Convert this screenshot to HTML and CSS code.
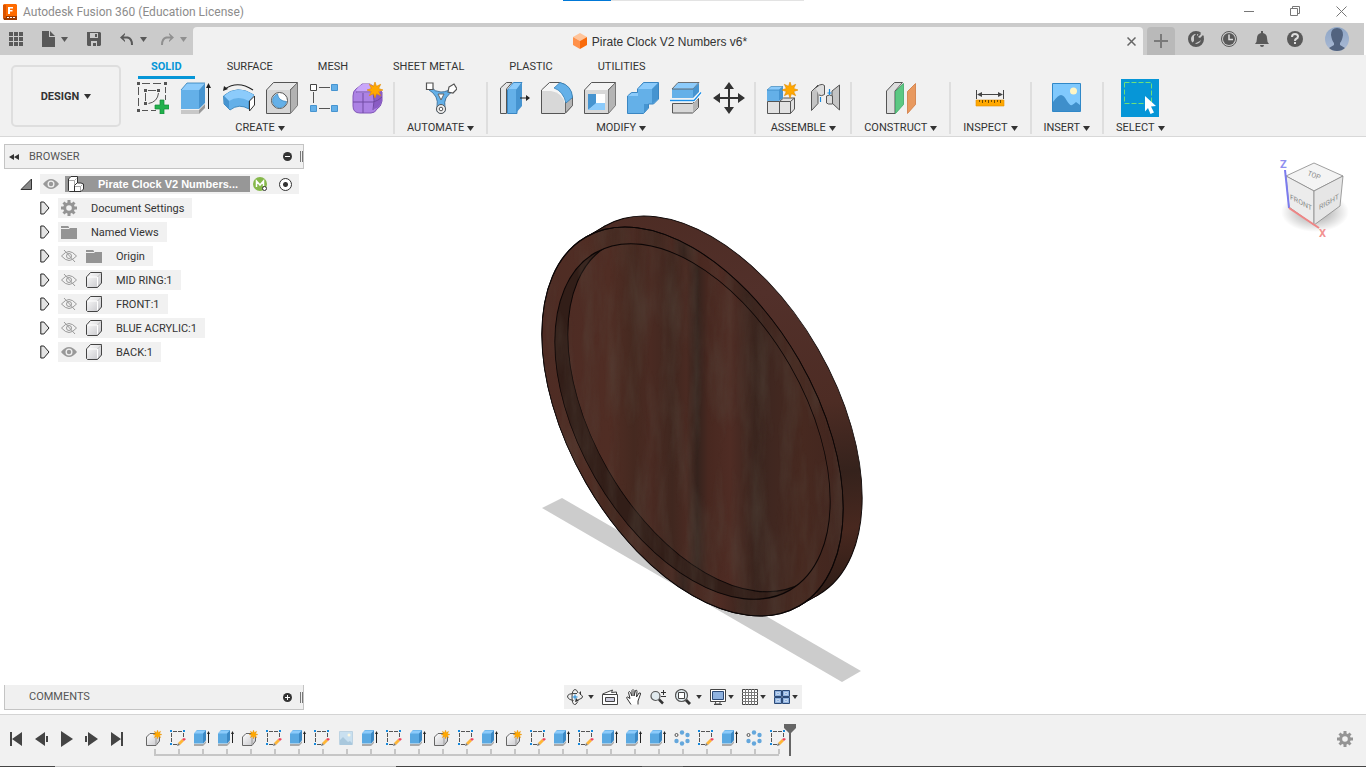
FILE: index.html
```html
<!DOCTYPE html>
<html lang="en">
<head>
    <meta charset="UTF-8">
    <title>Autodesk Fusion 360 (Education License)</title>
    <link rel="stylesheet" href="styles.css">
</head>
<body>
    <!-- Icon sprite -->
    <svg class="sprite" aria-hidden="true">
        <defs>
            <linearGradient id="silver" x1="0" y1="0" x2="1" y2="1"><stop offset="0" stop-color="#fff"/><stop offset="1" stop-color="#c4c4c8"/></linearGradient>
            <linearGradient id="avatarBg" x1="0" y1="0" x2="0" y2="1"><stop offset="0" stop-color="#8fa6c6"/><stop offset="1" stop-color="#a9b9d4"/></linearGradient>
        </defs>
        <symbol id="star" viewBox="-8 -8 16 16"><path fill="#ffa800" stroke="#e08a00" stroke-width=".6" d="M0-8 1.5-3.7 5.7-5.7 3.7-1.5 8 0 3.7 1.5 5.7 5.7 1.5 3.7 0 8-1.5 3.7-5.7 5.7-3.7 1.5-8 0-3.7-1.5-5.7-5.7-1.5-3.7z"/></symbol>

        <symbol id="sketch" viewBox="0 0 32 32">
            <path fill="none" stroke="#555" d="M5 1.500h8M16 1.500h8M28.500 5v6M28.500 13v5M1.500 5v8M1.500 16v8M5 28.500h6M14 28.500h5M11 8.500h8M8.500 11v8M21.500 11q-1 9-10 10.500"/>
            <path fill="#555" d="M0 0h3v3H0zM27 0h3v3h-3zM0 27h3v3H0zM7 7h3v3H7zM20 7h3v3h-3zM7 20h3v3H7z"/>
            <path fill="#21b14c" stroke="#128a38" stroke-width=".7" d="M23 18h4v5h5v4h-5v5h-4v-5h-5v-4h5z"/>
        </symbol>
        <symbol id="extrude" viewBox="0 0 32 32">
            <path fill="#c8c8c8" d="M1 28h18v4H1z"/><path fill="#999" d="m19 28 6-6v4l-6 6z"/>
            <path fill="#64b0e8" d="M1 8h18v19H1z"/><path fill="#8ccbfb" d="m1 8 6-7h18l-6 7z"/><path fill="#4694d0" d="m19 8 6-7v20l-6 6z"/>
            <path fill="none" stroke="#2e7eb8" stroke-width=".8" d="m1 8 6-7h18"/>
            <path fill="#222" d="M28 3h1v24h-1zM28.500 1l2.500 5h-5z"/>
        </symbol>
        <symbol id="revolve" viewBox="0 0 32 32">
            <path fill="none" stroke="#222" stroke-width="1.200" d="M2 7q13-9 28 1"/><path fill="#222" d="m0 9 1-5 4 3z"/>
            <path fill="#64b0e8" stroke="#2978b2" stroke-width=".8" d="M.5 14Q14 2 31 13l-5 6v8q-10-6-19 1l-6-6z"/>
            <path fill="#8ccbfb" d="M1 14Q14 2 31 13l-5 6Q15 13 6 19z"/><path fill="#4694d0" d="m1 14 5 5v8l-5-5z"/>
            <path fill="#fff" stroke="#333" d="m26.500 19 5-5v9l-5 6z"/>
        </symbol>
        <symbol id="hole" viewBox="0 0 32 32">
            <path fill="#e8e8e8" stroke="#555" d="m.5 8 7-7.500h24l-7.500 7.500v23.500H.5z"/><path fill="#d6d6d6" d="M1 8h23v23H1z"/>
            <path fill="#b2b2b2" stroke="#777" d="m24.500 8 7-7.500v23l-7 8z"/>
            <circle cx="13.500" cy="18.500" r="8" fill="#fff" stroke="#555"/><path fill="#64b0e8" stroke="#2978b2" stroke-width=".6" d="M11.500 12q1 7 9 7.500a7 7 0 1 1-9-7.500z"/>
        </symbol>
        <symbol id="pattern" viewBox="0 0 32 32">
            <path stroke="#555" d="M10 5.500h11M10 26.500h11M4.500 10v11"/>
            <path fill="#fff" stroke="#444" d="M1.500 2.500h6v6h-6z"/><path fill="#64b0e8" stroke="#4694d0" d="M22.500 2.500h6v6h-6zM1.500 23.500h6v6h-6zM22.500 23.500h6v6h-6z"/>
        </symbol>
        <symbol id="form" viewBox="0 0 32 32">
            <path fill="#ac82e4" stroke="#8257b8" d="M1 14q0-5 3-7t6-5h8l12 8v9q-1 6-5 8-2 4-6 4H8q-7 0-7-7z"/>
            <path fill="#c9a6fa" d="M4 8q4-5 7-6h8l5 6-4 3H5z"/><path fill="#8a5cc4" d="m22 13 8-4v9q-1 5-5 8l-3 1z"/>
            <path fill="none" stroke="#714aa3" d="M11 11v20M1 20h20q5-1 9-5M4 10h17q2 8 0 18"/>
            <use href="#star" x="15" y="0" width="16" height="16"/>
        </symbol>
        <symbol id="automate" viewBox="0 0 32 32">
            <path fill="#64b0e8" stroke="#2b5f8c" stroke-width=".8" d="M6 5q4 5 10 5 7 0 11-5l3 3q-6 3-9 8-2 4-1 9a4.500 4.500 0 1 1-8 0q1-6-1-10Q8 10 4 8z"/>
            <path fill="#fff" stroke="#666" d="m13 12 6 0-3 6z"/>
            <path fill="#fff" stroke="#555" stroke-width="1.200" d="M1.500 1h6.500v6.500H1.500zM24 5l5-3 3 5-4 4-5-1z"/>
            <circle cx="16" cy="27" r="4.500" fill="#eee" stroke="#555"/><circle cx="16" cy="27" r="1.800" fill="#fff" stroke="#555"/>
        </symbol>
        <symbol id="presspull" viewBox="0 0 32 32">
            <path fill="#e4e4e4" stroke="#555" d="m2.500 6 6-5.500H14L8.500 7v24.500h-6z"/>
            <path fill="#64b0e8" stroke="#3a86c2" d="m9.500 8 6-7.500h8.500l-5 7.500v23.500H9.500z"/><path fill="#4694d0" d="m18 8 6-7v23l-6 7z"/><path fill="#8ccbfb" d="m10 7 6-6h7l-4.500 6z"/>
            <path fill="#222" d="M22 15.500h6V13l4 3-4 3v-2.500h-6z"/>
        </symbol>
        <symbol id="fillet" viewBox="0 0 32 32">
            <path fill="#f5f5f5" stroke="#555" d="m.5 8 8-7.500H18q12 2 13.500 16v7L24 31.500H.5z"/>
            <path fill="#d8d8d8" d="M1 9h9q12 2 14 13v9H1z"/><path fill="#b4b4b4" stroke="#666" d="m24.500 20 7-5v8.500l-7 7.500z"/>
            <path fill="#64b0e8" stroke="#2978b2" stroke-width=".7" d="m13 6 6-5.500q12 3 12.500 15L25 21Q22 9 13 6z"/>
        </symbol>
        <symbol id="shell" viewBox="0 0 32 32">
            <path fill="#f3f3f3" stroke="#555" d="m.5 8 7-7.500h24L24 8v23.500H.5z"/><path fill="#d8d8d8" d="M1 8h23v23H1z"/><path fill="#b4b4b4" stroke="#777" d="m24.500 8 7-7.500v23l-7 8z"/>
            <path fill="#fff" d="M4 12h17v16H4z"/><path fill="#4694d0" d="M4 12h8v10l-8 6z"/><path fill="#8ccbfb" d="m4 28 8-7h9v7z"/>
        </symbol>
        <symbol id="combine" viewBox="0 0 32 32">
            <path fill="#64b0e8" stroke="#3a86c2" d="m.5 14 4-3.500h6V7l6-6.500h15V17l-5 5h-5v4l-5 5.500H.5z"/>
            <path fill="#8ccbfb" d="m11 7 6-6h14l-6 6zM1 14l4-3h6v3z"/><path fill="#4694d0" d="m25 7 6-6v16l-6 5zM17 22h4v4l-4 5z"/>
        </symbol>
        <symbol id="offset" viewBox="0 0 32 32">
            <path fill="#d8d8d8" stroke="#555" d="M2.500 21.500h20l6-5v9l-6 5.500h-20z"/><path fill="#b4b4b4" d="m23 22 5-5v8l-5 5z"/>
            <path fill="#64b0e8" d="M2 7h21v9H2z"/><path fill="#8ccbfb" stroke="#555" stroke-width=".8" d="m2 7 6-6.500h21L23 7z"/><path fill="#4694d0" d="m23 7 6-6v9l-6 6z"/>
            <path fill="none" stroke="#fff" stroke-width="3" d="M0 18.500h24l7-8"/><path fill="none" stroke="#1a8fe8" stroke-width="1.300" d="M0 18.500h24l7-8"/>
        </symbol>
        <symbol id="move" viewBox="0 0 32 32">
            <path fill="#333" d="m16 0 5 7h-4v8h8v-4l7 5-7 5v-4h-8v8h4l-5 7-5-7h4v-8H7v4l-7-5 7-5v4h8V7h-4z"/>
        </symbol>
        <symbol id="assemble" viewBox="0 0 32 32">
            <path fill="#e2e2e2" stroke="#555" d="M1.500 19.500h12l4-3.500h11v11l-4 4.500h-23z"/><path fill="none" stroke="#555" d="M13.500 19.500v12M13.500 19.500h11v12M24.500 19.500l4-3.500"/>
            <path fill="#64b0e8" d="M1 8h12v11H1z"/><path fill="#8ccbfb" stroke="#2978b2" stroke-width=".6" d="m1 8 4-3.500h12L13 8z"/><path fill="#4694d0" d="m13 8 4-3.500V16l-4 3z"/>
            <use href="#star" x="16" y="0" width="16" height="16"/>
        </symbol>
        <symbol id="joint" viewBox="0 0 32 32">
            <path fill="#c4c4c4" stroke="#555" d="M2.500 9.500 9 3v18.500l-6.500 7z"/>
            <path fill="#ddd" stroke="#555" d="m6.500 6 4-3q3-1.500 5 .5v9q-3 2-5.500.5"/>
            <path fill="#c4c4c4" stroke="#555" d="m23 9 7.500-6v25L23 21z"/><path fill="#ddd" stroke="#555" d="M17.500 14q3-2 6 0v8h-4l-2-1z"/>
            <path fill="none" stroke="#1689dc" stroke-width="1.200" d="M20.500 7v6M18.500 11h4M11.500 15v5"/>
        </symbol>
        <symbol id="construct" viewBox="0 0 32 32">
            <path fill="#dedede" stroke="#555" d="m1.500 9 8-8.500h8L10 9v22.500H1.500z"/><path fill="#5cc882" stroke="#3ca866" stroke-width=".8" d="m10.500 9.500 8-8v21l-8 9z"/>
            <path fill="#e8995f" stroke="#d07a40" stroke-width=".8" d="m22.500 9.500 8-8v21l-8 9z"/>
        </symbol>
        <symbol id="inspect" viewBox="0 0 32 32">
            <path fill="none" stroke="#444" d="M2.500 8v9M29.500 8v9M5 12.500h22"/><path fill="#444" d="m3 12.500 5-2.500v5zM29 12.500l-5-2.500v5z"/>
            <path fill="#ffa800" stroke="#e08f00" stroke-width=".6" d="M2 18h28v6H2z"/><path stroke="#744d00" d="M5.500 18v2M8.500 18v3M11.500 18v2M14.500 18v3M17.500 18v2M20.500 18v3M23.500 18v2M26.500 18v3"/>
        </symbol>
        <symbol id="picture" viewBox="0 0 32 32">
            <path fill="#80c9fd" stroke="#3088c8" d="M1.500 1.500h28v28h-28z"/><path fill="#3f8fcb" d="M2 20q5-7 8-7t6 6q3 5 5 4t4-3l4 3v6H2z"/><circle cx="22.500" cy="9" r="3.500" fill="#fff5c4"/>
        </symbol>
        <symbol id="select" viewBox="0 0 38 38">
            <path fill="#0696d7" d="M0 0h38v38H0z"/><path fill="none" stroke="#6ee07a" d="M3.500 3.500h27v21h-27z" stroke-dasharray="5 2"/>
            <path fill="#fff" d="m24 17 11 10-5 .5 3 6-3.500 1.500-2.500-6-3 3.500z"/>
        </symbol>

        <symbol id="caretDown" viewBox="0 0 7 5"><path fill="currentColor" d="M0 0h7L3.500 5z"/></symbol>
        <symbol id="apps" viewBox="0 0 14 14"><path fill="#595959" d="M0 0h4v4H0zM5 0h4v4H5zM10 0h4v4h-4zM0 5h4v4H0zM5 5h4v4H5zM10 5h4v4h-4zM0 10h4v4H0zM5 10h4v4H5zM10 10h4v4h-4z"/></symbol>
        <symbol id="file" viewBox="0 0 13 16"><path fill="#595959" d="M0 0h7v6h6v10H0zM8 0l5 5H8z"/></symbol>
        <symbol id="save" viewBox="0 0 14 14"><path fill="#595959" fill-rule="evenodd" d="M0 0h13l1 1v12l-1 1H1l-1-1zM3 1v5h8V1zM4 9v5h6V9z"/><path fill="#595959" d="M8 2h2v3H8zM6 11h3v3H6z"/></symbol>
        <symbol id="undo" viewBox="0 0 14 12"><path fill="currentColor" d="M0 4.500 5 0v1.500L3.500 3.500H8q5 1 5 8.500h-2q0-6-4-6.500H3.500L5 7.500V9z"/></symbol>
        <symbol id="refresh" viewBox="0 0 16 16"><circle cx="8" cy="8" r="6.500" fill="none" stroke="#595959" stroke-width="3"/><path fill="#cbcbcb" d="m11 3 4-2 1 5-4 2z"/><path fill="#595959" d="M6 5 9 2v3l3-3 1 1-3 3 2 1 3-3 1 2-4 4-4 2-3 3-2-2 3-3z"/></symbol>
        <symbol id="clock" viewBox="0 0 16 16"><circle cx="8" cy="8" r="7.500" fill="none" stroke="#595959"/><circle cx="8" cy="8" r="6" fill="#595959"/><path fill="none" stroke="#ddd" stroke-width="1.500" d="M8 3.500V8.500h4"/></symbol>
        <symbol id="bell" viewBox="0 0 14 16"><path fill="#595959" d="M6 0h2v2q4 1 4 5 0 4 2 6H0q2-2 2-6 0-4 4-5zM5 14h4q0 2-2 2t-2-2z"/></symbol>
        <symbol id="help" viewBox="0 0 16 16"><circle cx="8" cy="8" r="8" fill="#595959"/><path fill="none" stroke="#ddd" stroke-width="2" d="M5 6q0-3 3-3t3 2.500Q11 7 9 8q-1 .5-1 2"/><path fill="#ddd" d="M7 11h2v2H7z"/></symbol>
        <symbol id="avatar" viewBox="0 0 24 24"><circle cx="12" cy="12" r="12" fill="url(#avatarBg)"/><path fill="#52637f" d="M12 1q6 0 6 7-1 6-3 8v2l5 3q-3 3-8 3t-8-3l5-3v-2Q7 14 6 8q0-7 6-7z"/></symbol>

        <symbol id="eye" viewBox="0 0 16 12"><path fill="#999" d="M0 6q4-5 8-5t8 5q-4 5-8 5T0 6z"/><circle cx="8" cy="6" r="3.500" fill="#f0f0f0"/><circle cx="8" cy="6" r="2.200" fill="#999"/></symbol>
        <symbol id="eyeOff" viewBox="0 0 16 12"><path fill="none" stroke="#999" d="M.5 6q4-4.500 7.500-4.500T15.500 6q-4 4.500-7.500 4.500T.5 6zM3 0l11 12"/><circle cx="8" cy="6" r="2.500" fill="none" stroke="#999"/></symbol>
        <symbol id="gear" viewBox="-8 -8 16 16"><circle r="4.300" fill="none" stroke="#949494" stroke-width="3"/><path stroke="#949494" stroke-width="3" d="M0-8v3M0 8V5M-8 0h3M8 0H5M-5.500-5.500l2 2M5.500 5.500l-2-2M-5.500 5.500l2-2M5.500-5.500l-2 2"/></symbol>
        <symbol id="folder" viewBox="0 0 16 13"><path fill="#949494" d="M0 0h7l1 1v1H0zM0 3h8l1-1h7v11H0z"/></symbol>
        <symbol id="body" viewBox="0 0 16 16"><path fill="url(#silver)" stroke="#444" d="m.5 5 4-4.500h11V11l-4 4.500h-10l-1-1z"/><path fill="none" stroke="#fff" d="M1.500 5h10v9"/><path stroke="#999" stroke-width=".5" d="m11.500 5 4-4"/></symbol>
        <symbol id="component" viewBox="0 0 16 16"><path fill="#fff" stroke="#333" d="m.5 3 2.500-2.500h6.500V7h3.500l2.500 1v5L13 15.500H1.500l-1-1z"/><path fill="none" stroke="#333" d="M6.500 15V9.500L9 7"/><path fill="none" stroke="#aaa" d="M7 10.500h5.500V15M12.500 10.500l2-2M1 4.500h5.500V9M6.500 4.500l2-2"/></symbol>

        <symbol id="tlBody" viewBox="0 0 16 16"><path fill="url(#silver)" stroke="#666" d="M.5 7 4 3.500h6.500l3 3V11l-3.500 4.500H.5z"/><path fill="none" stroke="#999" d="M10 15V7.500"/><use href="#star" x="7" y="0" width="9" height="9"/></symbol>
        <symbol id="tlSketch" viewBox="0 0 16 16"><path fill="none" stroke="#555" d="M3 1.500h4M8 1.500h4M1.500 3v4M1.500 8v4M3 14.500h4M13.500 3v4"/><path fill="#1689dc" d="M0 0h2v2H0zM13 0h2v2h-2zM0 13h2v2H0z"/><path fill="#ffb638" d="m8 13 4-4 2 2-4 4z"/><path fill="#f0435a" d="m12 9 2-1 2 1-2 2z"/><path fill="#777" d="m7 16 1-3 2 2z"/></symbol>
        <symbol id="tlExtrude" viewBox="0 0 16 16"><path fill="#aaa" d="M0 14h9l3-3v2l-3 3H0z"/><path fill="#5aa9e2" d="M0 3.500 3 0h9v10l-3 3.500H0z"/><path fill="#8ccbfb" d="m0 3.500 3-3h9l-3 3z"/><path fill="#3b88c4" d="m9 3.500 3-3V10l-3 3.500z"/><path fill="#222" d="M14 3h1v10h-1zM14.500 1l1.500 3h-3z"/></symbol>
        <symbol id="tlCanvas" viewBox="0 0 16 16"><path fill="#c9e0f0" stroke="#bdd3e2" d="M1.500 1.500h13v13h-13z"/><path fill="#a9c8dd" d="m2 10 3-3 3 3 2 2 2-1 2 2v2H2z"/><circle cx="11" cy="5" r="1.500" fill="#fff8e0"/></symbol>
        <symbol id="tlPattern" viewBox="0 0 16 16"><circle cx="2.500" cy="5" r="1.500" fill="none" stroke="#555"/><g fill="#64a7dc"><circle cx="8" cy="2.500" r="2.200"/><circle cx="13.500" cy="5" r="2.200"/><circle cx="13.500" cy="11" r="2.200"/><circle cx="8" cy="13.500" r="2.200"/><circle cx="2.500" cy="11" r="2.200"/></g></symbol>

        <symbol id="orbit" viewBox="0 0 16 16"><path fill="none" stroke="#444" d="M10 4.500Q0 4 .5 8q1 3 6 3.500M13 5q4 2 2 4l-4 2M10.500 13Q9 16 7.500 15.500 5 15 5 8T8 .5q2 0 3 3.500"/><path stroke="#1689dc" d="M8 5.500v5M5.500 8h5"/><path fill="#333" d="m9 9-1 4 4-1zM12 4l2-2v4z"/></symbol>
        <symbol id="lookAt" viewBox="0 0 16 16"><path fill="#fff" stroke="#444" d="M.5 5.500h15v10H.5zM.5 5l10-4-1 2.500 5-.5v2"/><path fill="#ccd" stroke="#444" d="M3.500 8.500h9v4h-9z"/></symbol>
        <symbol id="pan" viewBox="0 0 16 16"><path fill="#fff" stroke="#333" d="M5 15.500 1 9.500Q0 8 1.500 8L4 9.500 2.500 3.500q.5-2 2 0L6 7V1.500q1-2 2 0V7l1.500-5.500q1.500-1 1.500 1L10.500 8 13 4q2-.5 1.500 1L12 12v3.500"/></symbol>
        <symbol id="zoom" viewBox="0 0 16 16"><circle cx="5.500" cy="7" r="4.500" fill="#e1eaee" stroke="#555" stroke-width="1.200"/><path stroke="#333" stroke-width="2.500" d="m9 10.500 4 4"/><path stroke="#333" d="M11 3.500h5M13.500 1v5M11 7.500h5"/></symbol>
        <symbol id="fit" viewBox="0 0 16 16"><circle cx="6.500" cy="6.500" r="6" fill="#e1eaee" stroke="#555" stroke-width="1.200"/><path fill="#fff" stroke="#444" d="M3.500 3.500h6v6h-6z"/><path stroke="#333" stroke-width="3" d="m11 11 4 4"/></symbol>
        <symbol id="display" viewBox="0 0 16 16"><path fill="#fff" stroke="#444" d="M.5.5h15v12H.5zM6 12.500h4v2.500H5z"/><path fill="#8fb2df" stroke="#2c4a77" d="M2.500 2.500h11v8h-11z"/><path stroke="#444" d="M4 15.500h8"/></symbol>
        <symbol id="grid" viewBox="0 0 16 16"><path fill="#fff" stroke="#444" d="M.5.5h15v15H.5z"/><path stroke="#777" d="M3.500 0v16M6.500 0v16M9.500 0v16M12.500 0v16M0 3.500h16M0 6.500h16M0 9.500h16M0 12.500h16"/></symbol>
        <symbol id="views" viewBox="0 0 16 14"><path fill="#8fb2df" stroke="#2c4a77" d="M.5.5h7v6h-7zM8.500.5h7v6h-7zM.5 7.500h7v6h-7zM8.500 7.500h7v6h-7z"/><path fill="none" stroke="#d8e5f6" stroke-width=".7" d="M2.500 2.500h3v2h-3zM10.500 2.500h3v2h-3zM2.500 9.500h3v2h-3zM10.500 9.500h3v2h-3z"/></symbol>
    </svg>

    <header class="titlebar">
        <svg class="app-logo" viewBox="0 0 14 16"><path fill="#ff6b00" d="M1 0h12l1 1v11H0V1z"/><path fill="#9c3a00" d="M0 12h14v4H1l-1-2z"/><path fill="#d95300" d="M0 1h3v13H0z"/><path fill="#fff" d="M5 3h5v1.500H7V6h2.500v1.500H7V10H5zM4 13h2v1H4zM7 13h2v1H7zM10 13h2v1h-2z"/></svg>
        <h1>Autodesk Fusion 360 (Education License)</h1>
        <span class="loader"></span>
        <div class="window-buttons">
            <button aria-label="Minimize"><svg width="11" height="11"><path stroke="#777" d="M0 5.500h10"/></svg></button>
            <button aria-label="Restore"><svg width="11" height="11"><path fill="none" stroke="#777" d="M.5 2.500h7v7h-7zM2.500 2.500v-2h7v7h-2"/></svg></button>
            <button aria-label="Close"><svg width="11" height="11"><path stroke="#777" d="m.5.500 10 10M10.500.500l-10 10"/></svg></button>
        </div>
    </header>

    <div class="tabbar">
        <div class="quick-access">
            <button class="apps" aria-label="Data panel"><svg width="14" height="14"><use href="#apps"/></svg></button>
            <button class="file" aria-label="File"><svg width="13" height="16"><use href="#file"/></svg><svg class="caret"><use href="#caretDown"/></svg></button>
            <button class="save" aria-label="Save"><svg width="14" height="14"><use href="#save"/></svg></button>
            <button class="undo" aria-label="Undo"><svg width="14" height="12"><use href="#undo"/></svg><svg class="caret"><use href="#caretDown"/></svg></button>
            <button class="redo" aria-label="Redo"><svg class="flip" width="14" height="12"><use href="#undo"/></svg><svg class="caret"><use href="#caretDown"/></svg></button>
        </div>
        <div class="doc-tab">
            <div class="doc-name">
                <svg width="14" height="16" viewBox="0 0 14 16"><path fill="#ffc49a" d="m7 0 7 4-7 4-7-4z"/><path fill="#ff914a" d="m0 4 7 4v8l-7-4z"/><path fill="#f96a0a" d="m14 4-7 4v8l7-4z"/></svg>
                <span>Pirate Clock V2 Numbers v6*</span>
            </div>
            <button aria-label="Close document"><svg width="9" height="9"><path stroke="#666" stroke-width="1.500" d="m.5.500 8 8M8.500.500l-8 8"/></svg></button>
        </div>
        <button class="new-tab" aria-label="New design"><svg width="14" height="14"><path fill="#7a7a7a" d="M6 0h2v6h6v2H8v6H6V8H0V6h6z"/></svg></button>
        <div class="account">
            <button aria-label="Extensions"><svg width="16" height="16"><use href="#refresh"/></svg></button>
            <button aria-label="Job status"><svg width="16" height="16"><use href="#clock"/></svg></button>
            <button aria-label="Notifications"><svg width="14" height="16"><use href="#bell"/></svg></button>
            <button aria-label="Help"><svg width="16" height="16"><use href="#help"/></svg></button>
            <button class="avatar" aria-label="Profile"><svg width="24" height="24"><use href="#avatar"/></svg></button>
        </div>
    </div>

    <div class="toolbar">
        <button class="workspace">DESIGN <svg class="caret"><use href="#caretDown"/></svg></button>
        <div class="ribbon">
            <nav class="tabs">
                <a class="active" href="#">SOLID</a>
                <a href="#">SURFACE</a>
                <a href="#">MESH</a>
                <a href="#">SHEET METAL</a>
                <a href="#">PLASTIC</a>
                <a href="#">UTILITIES</a>
            </nav>
            <div class="groups">
                <section class="group">
                    <div class="tools">
                        <button aria-label="Create Sketch"><svg><use href="#sketch"/></svg></button>
                        <button aria-label="Extrude"><svg><use href="#extrude"/></svg></button>
                        <button aria-label="Revolve"><svg><use href="#revolve"/></svg></button>
                        <button aria-label="Hole"><svg><use href="#hole"/></svg></button>
                        <button aria-label="Pattern"><svg><use href="#pattern"/></svg></button>
                        <button aria-label="Create Form"><svg><use href="#form"/></svg></button>
                    </div>
                    <button class="group-menu">CREATE<svg class="caret"><use href="#caretDown"/></svg></button>
                </section>
                <section class="group">
                    <div class="tools"><button aria-label="Automated Modeling"><svg><use href="#automate"/></svg></button></div>
                    <button class="group-menu">AUTOMATE<svg class="caret"><use href="#caretDown"/></svg></button>
                </section>
                <section class="group">
                    <div class="tools">
                        <button aria-label="Press Pull"><svg><use href="#presspull"/></svg></button>
                        <button aria-label="Fillet"><svg><use href="#fillet"/></svg></button>
                        <button aria-label="Shell"><svg><use href="#shell"/></svg></button>
                        <button aria-label="Combine"><svg><use href="#combine"/></svg></button>
                        <button aria-label="Offset Face"><svg><use href="#offset"/></svg></button>
                        <button aria-label="Move"><svg><use href="#move"/></svg></button>
                    </div>
                    <button class="group-menu">MODIFY<svg class="caret"><use href="#caretDown"/></svg></button>
                </section>
                <section class="group">
                    <div class="tools">
                        <button aria-label="New Component"><svg><use href="#assemble"/></svg></button>
                        <button aria-label="Joint"><svg><use href="#joint"/></svg></button>
                    </div>
                    <button class="group-menu">ASSEMBLE<svg class="caret"><use href="#caretDown"/></svg></button>
                </section>
                <section class="group">
                    <div class="tools"><button aria-label="Offset Plane"><svg><use href="#construct"/></svg></button></div>
                    <button class="group-menu">CONSTRUCT<svg class="caret"><use href="#caretDown"/></svg></button>
                </section>
                <section class="group">
                    <div class="tools"><button aria-label="Measure"><svg><use href="#inspect"/></svg></button></div>
                    <button class="group-menu">INSPECT<svg class="caret"><use href="#caretDown"/></svg></button>
                </section>
                <section class="group">
                    <div class="tools"><button aria-label="Canvas"><svg><use href="#picture"/></svg></button></div>
                    <button class="group-menu">INSERT<svg class="caret"><use href="#caretDown"/></svg></button>
                </section>
                <section class="group">
                    <div class="tools"><button class="selected" aria-label="Select"><svg><use href="#select"/></svg></button></div>
                    <button class="group-menu">SELECT<svg class="caret"><use href="#caretDown"/></svg></button>
                </section>
            </div>
        </div>
    </div>

    <main class="viewport">
        <svg class="model" viewBox="0 137 1366 577">
            <defs>
                <linearGradient id="wood" x1="0" x2="1" y1="0" y2="0">
                    <stop offset="0" stop-color="#4e2c24"/><stop offset=".15" stop-color="#502d24"/><stop offset=".24" stop-color="#452920"/>
                    <stop offset=".3" stop-color="#4a2a22"/><stop offset=".38" stop-color="#40271f"/><stop offset=".43" stop-color="#4a2a22"/>
                    <stop offset=".47" stop-color="#35231d"/><stop offset=".51" stop-color="#482820"/><stop offset=".59" stop-color="#4f2c24"/>
                    <stop offset=".68" stop-color="#3a251e"/><stop offset=".74" stop-color="#402720"/><stop offset=".85" stop-color="#472920"/><stop offset="1" stop-color="#42261f"/>
                </linearGradient>
                <linearGradient id="rim" x1="0" x2=".6" y1="0" y2="1">
                    <stop offset="0" stop-color="#2c1b16"/><stop offset=".1" stop-color="#4c2b23"/><stop offset=".35" stop-color="#52302a"/>
                    <stop offset=".6" stop-color="#4d2c24"/><stop offset=".75" stop-color="#35221c"/><stop offset=".87" stop-color="#48281f"/><stop offset="1" stop-color="#2f1d17"/>
                </linearGradient>
                <filter id="grain" x="0" y="0" width="1" height="1">
                    <feTurbulence type="fractalNoise" baseFrequency=".06 .012" numOctaves="5" seed="4"/>
                    <feColorMatrix values="0 0 0 0 .1  0 0 0 0 .08  0 0 0 0 .06  1.600 0 0 0 -.6"/>
                </filter>
                <clipPath id="faceClip"><circle r="174" transform="matrix(.866 .5 0 1 692.500 421.500)"/></clipPath>
                <clipPath id="pocketClip"><circle r="159" transform="matrix(.866 .5 0 1 692.500 421.500)"/></clipPath>
            </defs>
            <path fill="#ccc" d="m542 508 20-10 299 173-19 11z"/>
            <!-- rim, face, pocket -->
            <g stroke="#0c0606">
                <circle r="174" transform="matrix(.866 .5 0 1 711.500 410.500)" fill="url(#rim)"/>
                <path d="m586 237 19-11 213 369-19 11z" fill="#402720" stroke="none"/>
                <path d="m586 237 19-11M818 595l-19 11"/>
                <circle r="174" transform="matrix(.866 .5 0 1 692.500 421.500)" fill="url(#wood)"/>
                <g clip-path="url(#pocketClip)">
                    <path fill="#321e18" stroke="none" d="M540 220h310v400H540z"/>
                    <circle r="159" transform="matrix(.866 .5 0 1 705.500 414)" fill="url(#wood)"/>
                </g>
            </g>
            <g clip-path="url(#faceClip)"><path filter="url(#grain)" opacity=".45" d="M540 220h310v400H540z"/></g>
            <g stroke="#0c0606" fill="none">
                <circle r="174" transform="matrix(.866 .5 0 1 692.500 421.500)"/>
                <circle r="159" transform="matrix(.866 .5 0 1 692.500 421.500)"/>
                <circle r="159" transform="matrix(.866 .5 0 1 705.500 414)" clip-path="none" visibility="hidden"/>
            </g>
        </svg>

        <section class="browser">
            <header class="panel-header">
                <button aria-label="Collapse"><svg width="10" height="6"><path fill="#333" d="M5 0v6L0 3zM10 0v6L5 3z"/></svg></button>
                <h2>BROWSER</h2>
                <button aria-label="Hide"><svg width="9" height="9"><circle cx="4.500" cy="4.500" r="4.500" fill="#333"/><path stroke="#fff" d="M2 4.500h5"/></svg></button>
                <span class="grip"></span>
            </header>
            <ul class="tree">
                <li class="root">
                    <button class="toggle" aria-label="Collapse"><svg width="12" height="12"><path fill="#888" stroke="#333" d="M11.500 1v10.500H1z"/></svg></button>
                    <div class="chip">
                        <button aria-label="Visibility"><svg width="16" height="12"><use href="#eye"/></svg></button>
                        <div class="picked"><svg width="16" height="16"><use href="#component"/></svg><b>Pirate Clock V2 Numbers...</b></div>
                        <svg class="badge" width="14" height="14"><circle cx="7" cy="7" r="7" fill="#86b84a"/><path fill="none" stroke="#fff" stroke-width="1.500" d="M3.500 10V4L7 8l3.500-4v5"/><circle cx="11.500" cy="11.500" r="2" fill="#fff" stroke="#333"/></svg>
                        <input type="radio" checked aria-label="Activate component">
                    </div>
                </li>
                <li>
                    <button class="toggle" aria-label="Expand"><svg width="10" height="14"><path fill="#e4e4e4" stroke="#222" d="M.8 1h3L9 7l-5.200 6h-3z"/></svg></button>
                    <div class="chip"><svg width="16" height="16"><use href="#gear"/></svg><span>Document Settings</span></div>
                </li>
                <li>
                    <button class="toggle" aria-label="Expand"><svg width="10" height="14"><path fill="#e4e4e4" stroke="#222" d="M.8 1h3L9 7l-5.200 6h-3z"/></svg></button>
                    <div class="chip"><svg width="16" height="13"><use href="#folder"/></svg><span>Named Views</span></div>
                </li>
                <li>
                    <button class="toggle" aria-label="Expand"><svg width="10" height="14"><path fill="#e4e4e4" stroke="#222" d="M.8 1h3L9 7l-5.200 6h-3z"/></svg></button>
                    <div class="chip"><button aria-label="Visibility"><svg width="16" height="12"><use href="#eyeOff"/></svg></button><svg width="16" height="13"><use href="#folder"/></svg><span>Origin</span></div>
                </li>
                <li>
                    <button class="toggle" aria-label="Expand"><svg width="10" height="14"><path fill="#e4e4e4" stroke="#222" d="M.8 1h3L9 7l-5.200 6h-3z"/></svg></button>
                    <div class="chip"><button aria-label="Visibility"><svg width="16" height="12"><use href="#eyeOff"/></svg></button><svg width="16" height="16"><use href="#body"/></svg><span>MID RING:1</span></div>
                </li>
                <li>
                    <button class="toggle" aria-label="Expand"><svg width="10" height="14"><path fill="#e4e4e4" stroke="#222" d="M.8 1h3L9 7l-5.200 6h-3z"/></svg></button>
                    <div class="chip"><button aria-label="Visibility"><svg width="16" height="12"><use href="#eyeOff"/></svg></button><svg width="16" height="16"><use href="#body"/></svg><span>FRONT:1</span></div>
                </li>
                <li>
                    <button class="toggle" aria-label="Expand"><svg width="10" height="14"><path fill="#e4e4e4" stroke="#222" d="M.8 1h3L9 7l-5.200 6h-3z"/></svg></button>
                    <div class="chip"><button aria-label="Visibility"><svg width="16" height="12"><use href="#eyeOff"/></svg></button><svg width="16" height="16"><use href="#body"/></svg><span>BLUE ACRYLIC:1</span></div>
                </li>
                <li>
                    <button class="toggle" aria-label="Expand"><svg width="10" height="14"><path fill="#e4e4e4" stroke="#222" d="M.8 1h3L9 7l-5.200 6h-3z"/></svg></button>
                    <div class="chip"><button aria-label="Visibility"><svg width="16" height="12"><use href="#eye"/></svg></button><svg width="16" height="16"><use href="#body"/></svg><span>BACK:1</span></div>
                </li>
            </ul>
        </section>

        <svg class="viewcube" viewBox="1274 152 80 90">
            <defs><radialGradient id="cubeShadow"><stop offset="0" stop-color="#000" stop-opacity=".4"/><stop offset="1" stop-color="#000" stop-opacity="0"/></radialGradient></defs>
            <ellipse cx="1315" cy="212" rx="34" ry="20" fill="url(#cubeShadow)"/>
            <g stroke="#888" stroke-width=".8">
                <path fill="#f4f4f4" d="m1314 163 29 13-29 15-28-15z"/>
                <path fill="#ececec" d="m1286 176 28 15v34l-25-18z"/>
                <path fill="#e6e6e6" d="m1343 176-29 15v34l26-19z"/>
            </g>
            <path stroke="#7b7bee" stroke-width="2" d="m1285 170 4 38"/>
            <path stroke="#ef8585" stroke-width="2" d="m1289 208 30 20"/>
            <text transform="translate(1290 199) skewY(28)">FRONT</text>
            <text transform="translate(1319 210) skewY(-30)">RIGHT</text>
            <text transform="translate(1307 175) rotate(22)">TOP</text>
            <text class="axis z" x="1280" y="168">Z</text>
            <text class="axis x" x="1319" y="237">X</text>
        </svg>

        <section class="comments panel-header">
            <h2>COMMENTS</h2>
            <button aria-label="Show"><svg width="9" height="9"><circle cx="4.500" cy="4.500" r="4.500" fill="#333"/><path stroke="#fff" d="M2 4.500h5M4.500 2v5"/></svg></button>
            <span class="grip"></span>
        </section>

        <div class="navbar">
            <button aria-label="Orbit"><svg width="16" height="16"><use href="#orbit"/></svg><svg class="caret"><use href="#caretDown"/></svg></button>
            <button aria-label="Look At"><svg width="16" height="16"><use href="#lookAt"/></svg></button>
            <button aria-label="Pan"><svg width="16" height="16"><use href="#pan"/></svg></button>
            <button aria-label="Zoom"><svg width="16" height="16"><use href="#zoom"/></svg></button>
            <button aria-label="Fit"><svg width="16" height="16"><use href="#fit"/></svg><svg class="caret"><use href="#caretDown"/></svg></button>
            <button class="menu" aria-label="Display Settings"><svg width="16" height="16"><use href="#display"/></svg><svg class="caret"><use href="#caretDown"/></svg></button>
            <button class="menu" aria-label="Grid and Snaps"><svg width="16" height="16"><use href="#grid"/></svg><svg class="caret"><use href="#caretDown"/></svg></button>
            <button class="menu" aria-label="Viewports"><svg width="16" height="14"><use href="#views"/></svg><svg class="caret"><use href="#caretDown"/></svg></button>
        </div>
    </main>

    <footer class="timeline">
        <div class="playback">
            <button aria-label="First"><svg width="13" height="14"><path fill="#444" d="M0 0h2v14H0zM12 0v14L2 7z"/></svg></button>
            <button aria-label="Step back"><svg width="13" height="14"><path fill="#444" d="M10 0v14L0 7zM11 4h2v6h-2z"/></svg></button>
            <button aria-label="Play"><svg width="13" height="16"><path fill="#444" d="m1 0 12 8-12 8z"/></svg></button>
            <button aria-label="Step forward"><svg width="13" height="14"><path fill="#444" d="m3 0 10 7-10 7zM0 4h2v6H0z"/></svg></button>
            <button aria-label="Last"><svg width="13" height="14"><path fill="#444" d="M11 0h2v14h-2zM1 0v14l10-7z"/></svg></button>
        </div>
        <ol class="features" id="features"></ol>
        <svg class="marker" width="12" height="32"><path fill="#666" d="M0 0h12v4L7 9v23H5V9L0 4z"/></svg>
        <button class="settings" aria-label="Timeline settings"><svg width="16" height="16"><use href="#gear"/></svg></button>
    </footer>
    <div class="taskbar-edge"></div>

    <script>
        // Feature history, oldest first
        const features = [
            'Body', 'Sketch', 'Extrude', 'Extrude', 'Body', 'Sketch', 'Extrude', 'Sketch', 'Canvas',
            'Extrude', 'Sketch', 'Extrude', 'Body', 'Sketch', 'Extrude', 'Body', 'Sketch', 'Extrude',
            'Sketch', 'Extrude', 'Extrude', 'Extrude', 'Pattern', 'Sketch', 'Extrude', 'Pattern', 'Sketch'
        ];
        document.getElementById('features').innerHTML = features.map(type =>
            `<li><button aria-label="${type}"><svg width="16" height="16"><use href="#tl${type}"/></svg></button></li>`
        ).join('');
    </script>
</body>
</html>
```

FILE: styles.css
```css
* {
    box-sizing: border-box;
}
body {
    margin: 0;
    height: 100vh;
    display: flex;
    flex-direction: column;
    overflow: hidden;
    font-family: Roboto, "Liberation Sans", sans-serif;
    font-size: 11px;
    line-height: 14px;
    color: #333;
    background: #fff;
}
button {
    display: flex;
    align-items: center;
    justify-content: center;
    padding: 0;
    border: 0;
    background: none;
    font: inherit;
    color: inherit;
}
svg {
    display: block;
    flex: none;
}
h1, h2 {
    margin: 0;
    font-size: 11px;
    font-weight: normal;
}
.sprite {
    position: absolute;
    width: 0;
    height: 0;
}
.caret {
    width: 7px;
    height: 5px;
}

/* Title bar */
.titlebar {
    position: relative;
    display: flex;
    align-items: center;
    height: 23px;
    padding-left: 3px;
}
.app-logo {
    width: 14px;
    height: 16px;
    margin-right: 6px;
}
.titlebar h1 {
    font-size: 12px;
    color: #8c8c8c;
}
.loader {
    position: absolute;
    top: 0;
    left: 563px;
    width: 241px;
    height: 1px;
    background: linear-gradient(to right, #0078d7 20%, #e3e3e3 20%);
}
.window-buttons {
    display: flex;
    margin-left: auto;
    padding-right: 2px;
}
.window-buttons button {
    width: 46px;
    height: 20px;
}

/* Quick access bar and document tab */
.tabbar {
    display: flex;
    height: 32px;
    padding-top: 4px;
    margin-right: 2px;
    background: #cbcbcb;
}
.quick-access {
    display: flex;
    align-items: center;
    width: 193px;
    padding: 0 0 4px 9px;
    gap: 19px;
    color: #595959;
}
.quick-access button {
    gap: 6px;
}
.quick-access .redo {
    margin-left: -6px;
    color: #909090;
}
.flip {
    transform: scaleX(-1);
}
.doc-tab {
    flex: 1;
    display: flex;
    align-items: center;
    background: #f1f1f1;
    border-radius: 4px 4px 0 0;
    padding-right: 7px;
}
.doc-name {
    flex: 1;
    display: flex;
    align-items: center;
    justify-content: center;
    gap: 5px;
    font-family: "Liberation Sans", sans-serif;
    font-size: 12px;
}
.doc-name span {
    padding-top: 2px;
}
.new-tab {
    width: 28px;
    margin-left: 4px;
    border-radius: 4px 4px 0 0;
    background: #b9b9b9;
}
.account {
    display: flex;
    align-items: center;
    padding: 0 15px 4px 4px;
}
.account button {
    width: 33px;
}
.account .avatar {
    width: 24px;
    margin-left: 14px;
}

/* Toolbar */
.toolbar {
    display: flex;
    height: 82px;
    background: #f1f1f1;
    border-bottom: 1px solid #d8d8d8;
}
.workspace {
    width: 110px;
    height: 62px;
    margin: 10px 8px 0 11px;
    padding-top: 1px;
    gap: 5px;
    border: 2px solid #dedede;
    border-radius: 5px;
    font-weight: bold;
}
.tabs {
    display: flex;
    gap: 19px;
    padding-left: 9px;
}
.tabs a {
    height: 24px;
    padding: 5px 13px 0;
    border-bottom: 3px solid transparent;
    color: #333;
    text-decoration: none;
}
.tabs .active {
    color: #0696d7;
    font-weight: bold;
    border-color: #0696d7;
}
.groups {
    display: flex;
}
.group {
    display: flex;
    flex-direction: column;
    align-items: center;
    height: 52px;
    margin-top: 3px;
    padding: 0 4px;
    border-right: 2px solid #dedede;
}
.group:first-child {
    padding-left: 2px;
}
.group:last-child {
    border: 0;
}
.tools {
    display: flex;
    height: 32px;
}
.tools button {
    width: 43px;
}
.tools svg {
    width: 32px;
    height: 32px;
}
.tools .selected svg {
    width: 38px;
    height: 38px;
}
.group-menu {
    gap: 3px;
    margin-top: 7px;
    padding: 0 8px;
}

/* Viewport */
.viewport {
    flex: 1;
    min-height: 0;
    display: grid;
    grid-template-columns: 100%;
    grid-template-rows: 1fr auto;
}
.model {
    grid-area: 1 / 1 / 3 / 2;
    width: 100%;
    height: 100%;
    min-height: 0;
}
.browser, .viewcube {
    grid-area: 1 / 1;
}
.browser {
    width: 300px;
    margin: 7px 0 0 4px;
}
.panel-header {
    display: flex;
    align-items: center;
    width: 300px;
    height: 25px;
    padding: 0 0 0 4px;
    border: 1px solid #c4c4c4;
    background: #f0f0f0;
    color: #555;
}
.panel-header h2 {
    margin-left: 10px;
    margin-right: auto;
}
.grip {
    width: 3px;
    height: 11px;
    margin-left: 8px;
    border: solid #777;
    border-width: 0 1px;
}
.tree {
    list-style: none;
    margin: 3px 0 0;
    padding: 0;
}
.tree li {
    display: flex;
    align-items: center;
    height: 24px;
    padding-left: 35px;
}
.tree .root {
    padding-left: 16px;
}
.toggle {
    width: 12px;
    margin-right: 7px;
}
.root .toggle {
    margin-right: 8px;
}
.chip {
    display: flex;
    align-items: center;
    height: 20px;
    padding: 0 8px 0 3px;
    gap: 9px;
    background: #f1f1f1;
}
.chip span {
    margin-left: 5px;
    padding-top: 2px;
}
.root .chip {
    gap: 0;
    width: 259px;
    padding-right: 0;
}
.picked {
    display: flex;
    flex: none;
    align-items: center;
    gap: 14px;
    width: 185px;
    height: 16px;
    margin-left: 6px;
    padding-left: 3px;
    background: #979797;
    color: #fff;
}
.picked b {
    white-space: nowrap;
    font-family: "Liberation Sans", sans-serif;
}
.badge {
    margin: 0 12px 0 3px;
}
.chip input {
    appearance: none;
    width: 13px;
    height: 13px;
    margin: 0;
    border: 1px solid #333;
    border-radius: 50%;
    background: radial-gradient(circle, #333 2px, #fff 3px);
}
.viewcube {
    justify-self: end;
    width: 80px;
    height: 90px;
    margin: 15px 12px 0 0;
}
.viewcube text {
    fill: #888;
    font-size: 7px;
}
.viewcube .axis {
    font-size: 11px;
    font-weight: bold;
}
.viewcube .z {
    fill: #8f8ff0;
}
.viewcube .x {
    fill: #f29191;
}
.comments, .navbar {
    grid-area: 2 / 1;
    margin-bottom: 4px;
}
.comments {
    margin-left: 4px;
    padding-left: 14px;
    border-top: 0;
}
.navbar {
    justify-self: center;
    display: flex;
    align-items: center;
    justify-content: space-between;
    width: 238px;
    height: 24px;
    padding: 0 4px 0 3px;
    background: #f0f0f0;
}
.navbar button {
    gap: 5px;
}
.navbar .menu {
    gap: 2px;
}
.navbar .caret {
    width: 6px;
    height: 4px;
}

/* Timeline */
.timeline {
    display: flex;
    height: 52px;
    background: #f1f1f1;
    border-top: 1px solid #d4d4d4;
}
.playback {
    display: flex;
    width: 142px;
    padding-left: 4px;
}
.playback button {
    width: 25px;
    height: 48px;
}
.features {
    display: flex;
    list-style: none;
    margin: 0;
    padding: 0;
}
.features li {
    position: relative;
    width: 24px;
    height: 41px;
    border-bottom: 2px solid #c6c6c6;
    border-image: linear-gradient(#c6c6c6, #c6c6c6) 2;
    border-width: 0 0 2px;
}
.features li:first-child {
    border-image: linear-gradient(to right, transparent 50%, #c6c6c6 50%) 2;
}
.features li:last-child {
    border-image: linear-gradient(to right, #c6c6c6 54%, transparent 54%) 2;
}
/* tick joining a feature to the history line */
.features li::after {
    content: "";
    position: absolute;
    left: 12px;
    bottom: 0;
    width: 2px;
    height: 5px;
    background: #c6c6c6;
}
.features button {
    width: 24px;
    height: 16px;
    margin-top: 15px;
}
.marker {
    margin: 9px 0 0 -6px;
}
.settings {
    width: 16px;
    height: 48px;
    margin: 0 13px 0 auto;
}
.taskbar-edge {
    height: 1px;
    background: linear-gradient(to right, #444 4%, #c6c6c6 4% 29%, #444 29% 47%, #666 47% 50%, #444 50%);
}
```
